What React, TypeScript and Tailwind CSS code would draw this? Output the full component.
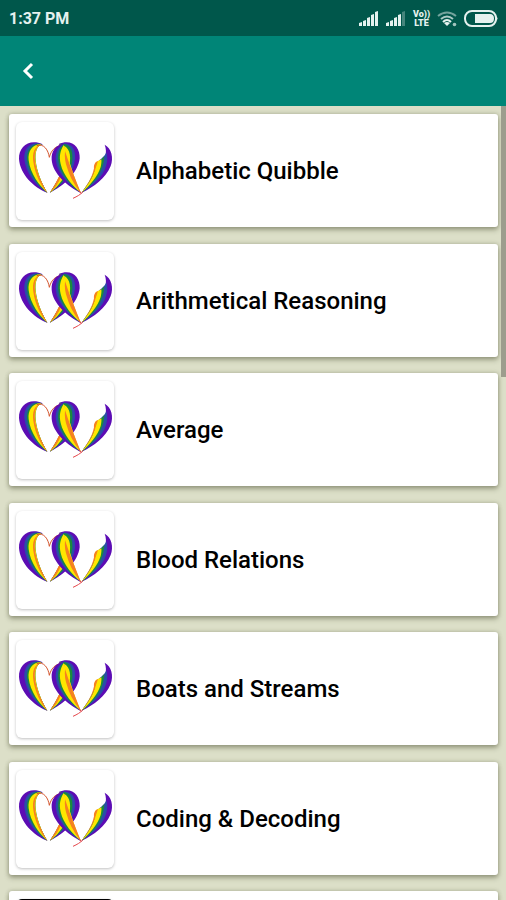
type Topic = { title?: string; dark?: boolean };

const topics: Topic[] = [
  { title: "Alphabetic Quibble" },
  { title: "Arithmetical Reasoning" },
  { title: "Average" },
  { title: "Blood Relations" },
  { title: "Boats and Streams" },
  { title: "Coding & Decoding" },
  { dark: true },
];

function RibbonLogo() {
  return (
    <svg viewBox="48 51 294 294" className="size-full" aria-hidden="true">
      {/* left lobe */}
      <path fill="#5c0cb4" d="M129 118C88 100 56 124 57 162C60 208 101 248 142 263C112 215 78 130 129 118Z" />
      <path fill="#2a4ca8" d="M127 118C92 106 71 130 73 162C77 204 109 245 142 263C112 215 84 130 127 118Z" />
      <path fill="#1a8a3c" d="M126 118C96 112 79 135 81 164C86 205 114 243 142 263C113 218 88 130 126 118Z" />
      <path fill="#ffe600" d="M125 118C98 116 83 138 86 166C91 206 118 243 142 263C114 218 87 134 125 118Z" />
      <path fill="#f58220" d="M124 118C103 124 96 145 100 170C105 208 123 243 142 263C113 216 84 137 124 118Z" />
      <path fill="none" stroke="#d4562f" strokeWidth="3" d="M110 122C132 114 145 136 148 157C153 137 165 124 184 121" />
      {/* back ribbon of the middle lobe */}
      <path fill="#5c0cb4" d="M176 117C216 100 241 127 239 160C235 202 190 244 150 263C178 222 221 160 176 117Z" />
      <path fill="#2a4ca8" d="M180 117C213 109 228 130 225 162C220 205 187 239 150 263C177 222 216 161 180 117Z" />
      <path fill="#1a8a3c" d="M179 118C208 113 220 134 217 164C213 207 184 239 150 263C178 222 211 164 179 118Z" />
      <path fill="#ffe600" d="M178 119C202 119 213 140 210 168C204 208 178 242 150 263C180 222 206 164 178 119Z" />
      <path fill="#f58220" d="M184 212C176 234 164 250 150 263C160 246 170 230 176 216Z" />
      {/* front ribbon of the middle lobe */}
      <path fill="#5c0cb4" d="M190 116C166 121 153 139 155 164C158 206 203 244 243 264C212 222 181 170 190 116Z" />
      <path fill="#2a4ca8" d="M192 117C174 125 164 144 168 169C174 209 209 242 243 264C213 222 187 170 192 117Z" />
      <path fill="#1a8a3c" d="M192 118C178 128 171 148 176 173C183 211 214 242 243 264C215 225 193 172 192 118Z" />
      <path fill="#ffe600" d="M191 120C180 138 177 155 182 177C190 213 219 243 243 264C226 230 214 184 191 120Z" />
      <path fill="#f58220" d="M195 138C193 158 196 174 202 190C210 218 226 244 243 264C232 236 219 204 208 176Z" />
      {/* right ribbon */}
      <path fill="#5c0cb4" d="M314 119C335 130 341 158 332 183C317 220 282 246 245 263C277 225 333 165 314 119Z" />
      <path fill="#2a4ca8" d="M319 142C312 160 296 163 289 178C284 207 264 238 245 263C278 243 309 215 318 184C323 167 323 155 319 142Z" />
      <path fill="#1a8a3c" d="M313 153C305 165 294 168 288 178C283 209 263 240 245 263C275 240 297 216 307 186C311 174 313 163 313 153Z" />
      <path fill="#ffe600" d="M304 163L287 172C288 209 263 240 245 263C271 240 294 213 302 186C304 177 305 170 304 163Z" />
      <path fill="#f58220" d="M294 168C284 172 281 181 282 190C276 219 260 242 245 263C264 239 281 212 288 186Z" />
      <path fill="none" stroke="#e5484d" strokeWidth="3" d="M219 280C232 274 241 269 249 260M236 256L244 266" />
    </svg>
  );
}

function SignalBars({ faded = false }: { faded?: boolean }) {
  return (
    <svg viewBox="0 0 20 15" className="h-[15px] w-5" fill="#e5f2ef" aria-hidden="true">
      <path d="M0 15V12L3 11V15ZM4 15V10L7 9V15ZM8 15V7L11 6V15ZM12 15V4L15 3V15Z" />
      <path opacity={faded ? 0.3 : 1} d="M16 15V1L19 0V15Z" />
    </svg>
  );
}

function StatusBar() {
  return (
    <div className="flex h-9 shrink-0 items-center justify-between bg-[#00574b] pt-px pr-2 pl-[9px] text-[#e5f2ef]">
      <span className="text-base font-bold">1:37 PM</span>
      <div className="flex items-center gap-[7px]">
        <SignalBars />
        <SignalBars faded />
        <span className="flex w-[17px] flex-col text-center text-[9px] leading-[9px] font-black">
          <span>Vo))</span>
          <span>LTE</span>
        </span>
        <svg viewBox="0 0 20 16" className="h-4 w-5" fill="none" stroke="#e5f2ef" strokeWidth="2" aria-hidden="true">
          <path opacity=".5" d="M1 5Q10 -2 19 5" />
          <path opacity=".75" d="M4 8Q10 3 16 8" />
          <path d="M6 11Q10 7 14 11" />
          <path fill="#e5f2ef" stroke="none" d="M7 12Q10 10 13 12L10 15Z" />
          <circle cx="17.5" cy="13.5" r="1.8" fill="#e5f2ef" stroke="none" opacity=".7" />
        </svg>
        <svg viewBox="0 0 34 17" className="h-[17px] w-[34px]" aria-hidden="true">
          <rect x="1" y="1" width="31" height="15" rx="7" fill="none" stroke="#e5f2ef" strokeWidth="2" />
          <path fill="#e5f2ef" d="M11 4H26Q30 4 30 8.500T26 13H11Z" />
          <path fill="#e5f2ef" d="M32 6Q35 8.500 32 11Z" />
        </svg>
      </div>
    </div>
  );
}

function TopicCard({ title, dark }: Topic) {
  return (
    <li className="odd:mb-[17px] even:mb-4">
      <button
        type="button"
        aria-label={title ? undefined : "Topic"}
        className="flex h-[113px] w-full items-center gap-[22px] rounded-[3px] bg-white px-[7px] text-left shadow-[0_3px_5px_rgba(70,75,45,0.4),0_0_4px_rgba(70,75,45,0.3)]"
      >
        <span
          className={`block size-[98px] shrink-0 overflow-hidden rounded-md shadow-[0_1px_3px_rgba(0,0,0,0.25)] ${dark ? "bg-black" : "bg-white"}`}
        >
          {!dark && <RibbonLogo />}
        </span>
        <span className="text-2xl leading-7 font-medium text-black">{title}</span>
      </button>
    </li>
  );
}

export default function App() {
  return (
    <div className="flex h-screen flex-col overflow-hidden bg-[#dcdfc8] font-['Roboto',sans-serif]">
      <StatusBar />
      <header className="flex h-[70px] shrink-0 items-center bg-[#008577] px-4">
        <button type="button" aria-label="Back" className="flex size-6 items-center justify-center">
          <svg viewBox="0 0 12 18" className="h-[18px] w-3" fill="none" stroke="white" strokeWidth="3" aria-hidden="true">
            <path d="M10 2L3 9L10 16" />
          </svg>
        </button>
      </header>
      <main className="relative min-h-0 flex-1 overflow-hidden">
        <ul className="pt-2 pr-2 pl-[9px]">
          {topics.map((topic, index) => (
            <TopicCard key={index} {...topic} />
          ))}
        </ul>
        <div className="absolute top-0 right-0 h-[271px] w-[5px] bg-[#9c9d8d]" />
      </main>
    </div>
  );
}
